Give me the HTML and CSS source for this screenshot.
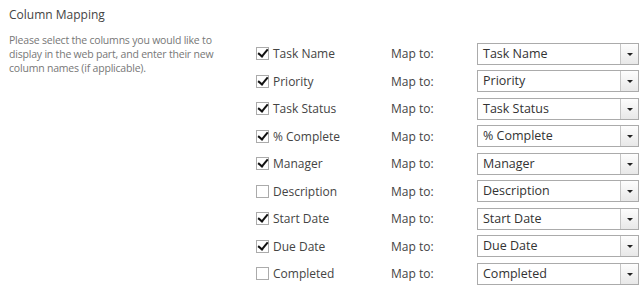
FILE: index.html
```html
<!DOCTYPE html>
<html>
<head>
<meta charset="utf-8">
<link rel="stylesheet" href="styles.css">
</head>
<body>
<div class="section">
  <div class="info">
    <h3 class="title">Column Mapping</h3>
    <p class="desc">Please select the columns you would like to display in the web part, and enter their new column names (if applicable).</p>
  </div>
  <div class="rows">
    <div class="row"><label class="field"><span class="cb on"></span>Task Name</label><span class="map">Map to:</span><div class="select"><span class="val">Task Name</span><span class="btn"></span></div></div>
    <div class="row"><label class="field"><span class="cb on"></span>Priority</label><span class="map">Map to:</span><div class="select"><span class="val">Priority</span><span class="btn"></span></div></div>
    <div class="row"><label class="field"><span class="cb on"></span>Task Status</label><span class="map">Map to:</span><div class="select"><span class="val">Task Status</span><span class="btn"></span></div></div>
    <div class="row"><label class="field"><span class="cb on"></span>% Complete</label><span class="map">Map to:</span><div class="select"><span class="val">% Complete</span><span class="btn"></span></div></div>
    <div class="row"><label class="field"><span class="cb on"></span>Manager</label><span class="map">Map to:</span><div class="select"><span class="val">Manager</span><span class="btn"></span></div></div>
    <div class="row"><label class="field"><span class="cb"></span>Description</label><span class="map">Map to:</span><div class="select"><span class="val">Description</span><span class="btn"></span></div></div>
    <div class="row"><label class="field"><span class="cb on"></span>Start Date</label><span class="map">Map to:</span><div class="select"><span class="val">Start Date</span><span class="btn"></span></div></div>
    <div class="row"><label class="field"><span class="cb on"></span>Due Date</label><span class="map">Map to:</span><div class="select"><span class="val">Due Date</span><span class="btn"></span></div></div>
    <div class="row"><label class="field"><span class="cb"></span>Completed</label><span class="map">Map to:</span><div class="select"><span class="val">Completed</span><span class="btn"></span></div></div>
  </div>
</div>
</body>
</html>
```
FILE: styles.css
```css
html, body {
  margin: 0;
  padding: 0;
  background: #fff;
}
body {
  font-family: "Open Sans", "Liberation Sans", sans-serif;
  color: #444;
}
.section {
  display: flex;
  padding-left: 9px;
}
.info {
  width: 247px;
  flex: none;
}
.title {
  margin: 0;
  padding-top: 7px;
  font-size: 12px;
  font-weight: normal;
  line-height: 16px;
  color: #444;
}
.desc {
  margin: 10px 0 0;
  font-size: 10.5px;
  letter-spacing: -0.2px;
  line-height: 14px;
  color: #777;
  width: 225px;
}
.rows {
  padding-top: 40px;
  display: flex;
  flex-direction: column;
}
.row {
  display: grid;
  grid-template-columns: 135px 86px 162px;
  align-items: center;
  height: 27.5px;
  font-size: 12px;
}
.field {
  display: flex;
  align-items: center;
  gap: 4px;
}
.cb {
  width: 11px;
  height: 11px;
  border: 1px solid #ababab;
  background: #fff;
  position: relative;
  flex: none;
}
.cb.on::after {
  content: "";
  position: absolute;
  left: 3px;
  top: -1px;
  width: 4px;
  height: 8px;
  border-right: 2.5px solid #111;
  border-bottom: 2.5px solid #111;
  transform: rotate(40deg);
}
.map {
  color: #444;
}
.select {
  display: flex;
  height: 20px;
  border: 1px solid #ababab;
  background: #fff;
}
.val {
  flex: 1;
  padding-left: 5px;
  line-height: 20px;
  color: #333;
  font-size: 12.5px;
}
.btn {
  width: 17px;
  border-left: 1px solid #c6c6c6;
  background: linear-gradient(#fdfdfd, #e8e8e8);
  position: relative;
}
.btn::after {
  content: "";
  position: absolute;
  left: 6px;
  top: 9px;
  border-left: 3px solid transparent;
  border-right: 3px solid transparent;
  border-top: 3px solid #222;
}
```
